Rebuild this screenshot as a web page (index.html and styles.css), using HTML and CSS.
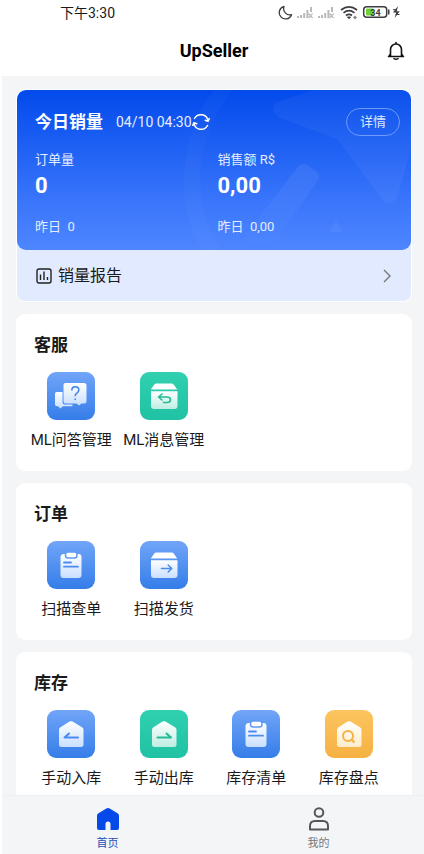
FILE: index.html
```html
<!DOCTYPE html>
<html lang="zh-CN">
<head>
<meta charset="utf-8">
<meta name="viewport" content="width=device-width, initial-scale=1">
<title>UpSeller</title>
<link rel="stylesheet" href="styles.css">
</head>
<body>
<svg class="defs" width="0" height="0" aria-hidden="true">
  <defs>
    <linearGradient id="paper-blue" x1="0" y1="0" x2="0" y2="1"><stop offset="0" stop-color="#fff"/><stop offset="1" stop-color="#c9dfff"/></linearGradient>
    <linearGradient id="paper-green" x1="0" y1="0" x2="0" y2="1"><stop offset="0" stop-color="#fff"/><stop offset="1" stop-color="#bdeee2"/></linearGradient>
    <linearGradient id="paper-orange" x1="0" y1="0" x2="0" y2="1"><stop offset="0" stop-color="#fff"/><stop offset="1" stop-color="#ffeccb"/></linearGradient>
    <linearGradient id="fade" x1="0" y1="0" x2="0" y2="1"><stop offset="0" stop-color="#fff" stop-opacity=".07"/><stop offset="1" stop-color="#fff" stop-opacity="0"/></linearGradient>
    <symbol id="clipboard" viewBox="0 0 48 48">
      <path d="M16 13h15.500a3 3 0 0 1 3 3v18a3 3 0 0 1-3 3h-15a3 3 0 0 1-3-3V16a3 3 0 0 1 2.500-3z" fill="url(#paper-blue)"/>
      <rect x="18.500" y="11" width="11.500" height="6" rx="2.500" fill="#fff" stroke="#629bf5" stroke-width="1.500"/>
      <path d="M17 21.500h7M17 25.700h14" stroke="#4b8bee" stroke-width="1.800" stroke-linecap="round"/>
    </symbol>
    <symbol id="warehouse" viewBox="0 0 48 48">
      <path d="M22.500 11.600q1.500-.9 3 0l9.500 5.700q1.500.9 1.500 2.500V34.500a2.500 2.500 0 0 1-2.500 2.500H14.500a2.500 2.500 0 0 1-2.500-2.500V19.800q0-1.600 1.500-2.500z"/>
    </symbol>
    <symbol id="carton" viewBox="0 0 48 48">
      <path d="M16.500 11.500h15q1.500 0 2.400 1.300l3.300 4.700h-26.400l3.300-4.700q.9-1.300 2.400-1.300z" fill="#fff"/>
      <path d="M11 19.300h26.500V34a3 3 0 0 1-3 3H14a3 3 0 0 1-3-3z"/>
    </symbol>
  </defs>
</svg>

<div class="status">
  <span class="clock">下午3:30</span>
  <svg class="status-icons" width="126" height="18" viewBox="0 0 126 18" fill="none" aria-hidden="true">
    <path d="M6 2.500A6.300 6.300 0 1 0 13.500 10.700 6.300 6.300 0 0 1 6 2.500z" stroke="#3c3d42" stroke-width="1.300" stroke-linejoin="round"/>
    <g id="signal" fill="#b9b9b9">
      <path d="M19 12h2v2h-2zM22 11h2v3h-2zM25.200 9h2v5h-2zM28.400 6h2v8h-2zM32 3h2v5h-2z"/>
      <path d="M30.500 9.500l4 4.500M34.500 9.500l-4 4.500" stroke="#b9b9b9" stroke-width="1.200"/>
    </g>
    <use href="#signal" x="21"/>
    <g stroke="#3c3d42" stroke-width="1.700">
      <path d="M63 6q8-6.200 16 0M65.500 8.800q5.500-4.400 11 0M68 11.500q3-2.400 6 0"/>
      <path d="M69.500 13h3l-1.500 1.700z" fill="#3c3d42" stroke-width="1"/>
    </g>
    <path d="M77 11.500l2 2-2 2-2-2z" fill="#888"/>
    <rect x="85.700" y="2.700" width="23" height="10.600" rx="3" stroke="#3c3d42" stroke-width="1.500"/>
    <rect x="88" y="4.500" width="7.500" height="7" rx="1" fill="#6cd131"/>
    <path d="M110.800 5.500v5" stroke="#3c3d42" stroke-width="1.500"/>
    <text x="97.500" y="11.500" text-anchor="middle" class="battery">34</text>
    <path d="M120 2l-5 6.500h3.200l-1.500 5.500 5-6.800h-3z" fill="#3c3d42"/>
    <path d="M115 5.700h4M117.500 10.500h4" stroke="#3c3d42"/>
  </svg>
</div>

<header class="topbar">
  <h1>UpSeller</h1>
  <button class="bell" type="button" aria-label="通知">
    <svg width="18" height="20" viewBox="0 0 18 20" fill="none" stroke="#111" stroke-width="1.600" stroke-linejoin="round" stroke-linecap="round">
      <path d="M9 1.500v1.300M1.500 15.500h15M3.500 15.300V8.500a5.500 5.500 0 0 1 11 0v6.800M3.500 13l-1.500 2.300M14.500 13l1.500 2.300M7 17.600q2 1.300 4 0"/>
    </svg>
  </button>
</header>

<main>
  <section class="sales">
    <div class="panel">
      <svg class="deco" viewBox="0 0 394 160" preserveAspectRatio="xMaxYMin slice" fill="#fff" aria-hidden="true">
        <path fill-opacity=".025" d="M196 0h20C190 30 180 75 184 100c2 25 8 43 20 60h-18C158 120 160 50 196 0z"/>
        <path fill-opacity=".045" d="M296 0h98v60l-14 48q-8 10-16 0L320 49 263 28q-12-8-3-16z"/>
        <path fill="url(#fade)" d="M280 78q4-6 10-3l9 6q5 4 2 9l-48 70h-36z"/>
        <path fill-opacity=".04" d="M319 130l7 12h-14z"/>
      </svg>
      <div class="sales-head">
        <h2>今日销量</h2>
        <span class="time">04/10 04:30</span>
        <button class="refresh" type="button" aria-label="刷新">
          <svg width="18" height="18" viewBox="0 0 18 18" fill="none" stroke="#fff" stroke-width="1.500" stroke-linecap="round" stroke-linejoin="round">
            <path d="M2.500 5.500A7.200 7.200 0 0 1 16 8M15.500 12.500A7.200 7.200 0 0 1 2 10M13.200 7.200l2.800 1.200 1.200-2.800M4.800 10.800L2 9.600l-1.200 2.800"/>
          </svg>
        </button>
        <button class="detail" type="button">详情</button>
      </div>
      <div class="stats">
        <div class="stat"><span>订单量</span><strong>0</strong><span class="prev">昨日&nbsp; 0</span></div>
        <div class="stat"><span>销售额 R$</span><strong>0,00</strong><span class="prev">昨日&nbsp; 0,00</span></div>
      </div>
    </div>
    <a class="report" href="#report">
      <svg width="16" height="16" viewBox="0 0 16 16" fill="none" stroke="#222" stroke-width="1.400" aria-hidden="true"><rect x="1" y="1" width="14" height="14" rx="2"/><path d="M4.500 6.500v5.500M8 3.500v8.500M11.500 9v3"/></svg>
      <span>销量报告</span>
      <svg class="chevron" width="10" height="14" viewBox="0 0 10 14" fill="none" stroke="#777" stroke-width="1.400" aria-hidden="true"><path d="M2 1l6 6-6 6"/></svg>
    </a>
  </section>

  <section class="card">
    <h2>客服</h2>
    <div class="grid">
      <a class="item" href="#qa">
        <svg class="tile blue" viewBox="0 0 48 48" fill="none" aria-hidden="true">
          <path d="M9.500 20h6v10q0 2.500 2.500 2.500h7.500v1.700H16l-2.500 2.200-2.500-2.200H10q-2 0-2-2V21.500q0-1.500 1.500-1.500z" fill="url(#paper-blue)"/>
          <path d="M18.500 11h18.500a2.500 2.500 0 0 1 2.500 2.500v15.500a2.500 2.500 0 0 1-2.500 2.500h-2.500L32 33.500l-2.500-2H18.500a2 2 0 0 1-2-2V13a2 2 0 0 1 2-2z" fill="url(#paper-blue)"/>
          <path d="M24.800 18.500q0-3.700 3.500-3.700t3.500 3.300q0 1.800-1.900 3.100-1.700 1.100-1.700 3M28.200 26.500v1.500" stroke="#3e82ec" stroke-width="1.500"/>
        </svg>
        <span>ML问答管理</span>
      </a>
      <a class="item" href="#messages">
        <svg class="tile green" viewBox="0 0 48 48" fill="none" aria-hidden="true">
          <use href="#carton" fill="url(#paper-green)"/>
          <path d="M22 22l-3.500 3 3.500 3M19 25h8q3.500 0 3.500 2.700T27 30.500h-3.500" stroke="#28b99a" stroke-width="1.600" stroke-linecap="round" stroke-linejoin="round"/>
        </svg>
        <span>ML消息管理</span>
      </a>
    </div>
  </section>

  <section class="card">
    <h2>订单</h2>
    <div class="grid">
      <a class="item" href="#scan-check">
        <svg class="tile blue" viewBox="0 0 48 48" fill="none" aria-hidden="true"><use href="#clipboard"/></svg>
        <span>扫描查单</span>
      </a>
      <a class="item" href="#scan-ship">
        <svg class="tile blue" viewBox="0 0 48 48" fill="none" aria-hidden="true">
          <use href="#carton" fill="url(#paper-blue)"/>
          <path d="M21.500 27.500h10M28.200 24l3.500 3.500-3.500 3.500" stroke="#4b8bee" stroke-width="1.600" stroke-linecap="round" stroke-linejoin="round"/>
        </svg>
        <span>扫描发货</span>
      </a>
    </div>
  </section>

  <section class="card">
    <h2>库存</h2>
    <div class="grid">
      <a class="item" href="#stock-in">
        <svg class="tile blue" viewBox="0 0 48 48" fill="none" aria-hidden="true">
          <use href="#warehouse" fill="url(#paper-blue)"/>
          <path d="M31 27.500H17.500l4.500-4" stroke="#4b8bee" stroke-width="2" stroke-linecap="round" stroke-linejoin="round"/>
        </svg>
        <span>手动入库</span>
      </a>
      <a class="item" href="#stock-out">
        <svg class="tile green" viewBox="0 0 48 48" fill="none" aria-hidden="true">
          <use href="#warehouse" fill="url(#paper-green)"/>
          <path d="M17.500 27.500H31l-4.500-4" stroke="#28b99a" stroke-width="2" stroke-linecap="round" stroke-linejoin="round"/>
        </svg>
        <span>手动出库</span>
      </a>
      <a class="item" href="#stock-list">
        <svg class="tile blue" viewBox="0 0 48 48" fill="none" aria-hidden="true"><use href="#clipboard"/></svg>
        <span>库存清单</span>
      </a>
      <a class="item" href="#stocktake">
        <svg class="tile orange" viewBox="0 0 48 48" fill="none" aria-hidden="true">
          <use href="#warehouse" fill="url(#paper-orange)"/>
          <circle cx="23" cy="26" r="5" stroke="#f5b243" stroke-width="2"/><path d="M26.500 29.500l3 3" stroke="#f5b243" stroke-width="2.200"/>
        </svg>
        <span>库存盘点</span>
      </a>
    </div>
  </section>
</main>

<nav class="tabs">
  <a class="tab active" href="#home">
    <svg width="24" height="24" viewBox="0 0 24 24" aria-hidden="true"><path d="M10.300 1.500q1.700-1 3.400 0l7.800 4.700q1.500.9 1.500 2.600V21a2 2 0 0 1-2 2h-6.500v-6a2.500 2.500 0 0 0-5 0v6H3a2 2 0 0 1-2-2V8.800q0-1.700 1.500-2.600z" fill="#0549e8"/></svg>
    <span>首页</span>
  </a>
  <a class="tab" href="#me">
    <svg width="24" height="24" viewBox="0 0 24 24" fill="none" stroke="#55565c" stroke-width="2" aria-hidden="true"><circle cx="12" cy="5.500" r="4.300"/><path d="M3 22.500V19q0-5 5-5h8q5 0 5 5v3.500z" stroke-linejoin="round"/></svg>
    <span>我的</span>
  </a>
</nav>
</body>
</html>
```

FILE: styles.css
```css
* {
  box-sizing: border-box;
}

body {
  margin: 0;
  padding-left: 2px;
  height: 100vh;
  display: flex;
  flex-direction: column;
  background: #fff;
  color: #1a1a1a;
  font-family: Roboto, "Noto Sans CJK SC", sans-serif;
  font-size: 15px;
  line-height: 20px;
}

h1,
h2 {
  margin: 0;
  font-size: 17px;
  line-height: 24px;
  font-weight: 700;
}

a {
  color: inherit;
  text-decoration: none;
}

button {
  margin: 0;
  padding: 0;
  border: 0;
  background: none;
  color: inherit;
  font: inherit;
}

svg {
  display: block;
  flex: none;
}

.defs {
  position: absolute;
}

.status {
  display: flex;
  justify-content: space-between;
  align-items: center;
  height: 26px;
  padding: 0 20px 0 58px;
}

.clock {
  font-family: Roboto, "Noto Sans CJK SC", sans-serif;
  font-size: 14px;
}

.battery {
  font: 700 9px Roboto, sans-serif;
  fill: #3c3d42;
}

.topbar {
  display: grid;
  grid-template-columns: 1fr auto 1fr;
  align-items: center;
  height: 50px;
  padding: 0 19px 0 21px;
}

.topbar h1 {
  grid-column: 2;
  color: #000;
  font-size: 18px;
}

.bell {
  justify-self: end;
}

main {
  flex: 1;
  min-height: 0;
  overflow: hidden;
  display: flex;
  flex-direction: column;
  gap: 12px;
  padding: 13px 12px 0 14px;
  background: #f4f5f7;
}

.sales {
  flex: none;
  border: 1px solid #fff;
  border-radius: 9px;
  background: #e1eafe;
  overflow: hidden;
}

.panel {
  position: relative;
  overflow: hidden;
  padding: 18px 11px 13px 18px;
  border-radius: 9px;
  background: linear-gradient(#024aec, #3a76fb 70%, #4e86ff);
  color: #fff;
}

.deco {
  position: absolute;
  inset: 0;
  width: 100%;
  height: 100%;
}

.sales-head,
.stats {
  position: relative;
}

.sales-head {
  display: flex;
  align-items: center;
  height: 28px;
}

.time {
  margin-left: 13px;
  color: #e6edfe;
  font-size: 14px;
}

.detail {
  margin-left: auto;
  width: 54px;
  height: 28px;
  border: 1px solid #6f9af8;
  border-radius: 14px;
  color: #dce7fe;
  font-size: 13px;
}

.stats {
  display: grid;
  grid-template-columns: 1fr 1fr;
  margin-top: 14px;
  color: #e6edfe;
  font-size: 13px;
}

.stat {
  display: flex;
  flex-direction: column;
}

.stat strong {
  color: #fff;
  font-size: 22px;
  line-height: 32px;
}

.prev {
  margin-top: 15px;
}

.report {
  display: flex;
  align-items: center;
  gap: 6px;
  height: 51px;
  padding: 0 19px;
  font-size: 16px;
}

.chevron {
  margin-left: auto;
}

.card {
  flex: none;
  padding: 19px 17px 21px 9px;
  border-radius: 9px;
  background: #fff;
}

.card h2 {
  padding-left: 9px;
}

.grid {
  display: grid;
  grid-template-columns: repeat(4, 1fr);
  margin-top: 15px;
}

.item {
  display: flex;
  flex-direction: column;
  align-items: center;
  gap: 10px;
  white-space: nowrap;
}

.tile {
  width: 48px;
  height: 48px;
  border-radius: 9px;
}

.blue {
  background: linear-gradient(#71a5f8, #357de9);
}

.green {
  background: linear-gradient(#30d0b0, #20c2a4);
}

.orange {
  background: linear-gradient(#fcc45f, #f6b142);
}

.tabs {
  display: flex;
  flex: none;
  height: 59px;
  border-top: 1px solid #eff0f3;
  background: #f4f5f7;
}

.tab {
  flex: 1;
  display: flex;
  flex-direction: column;
  align-items: center;
  gap: 5px;
  padding-top: 11px;
  color: #77787c;
  font-size: 11px;
  line-height: 16px;
}

.active {
  color: #1d50b4;
}
```
